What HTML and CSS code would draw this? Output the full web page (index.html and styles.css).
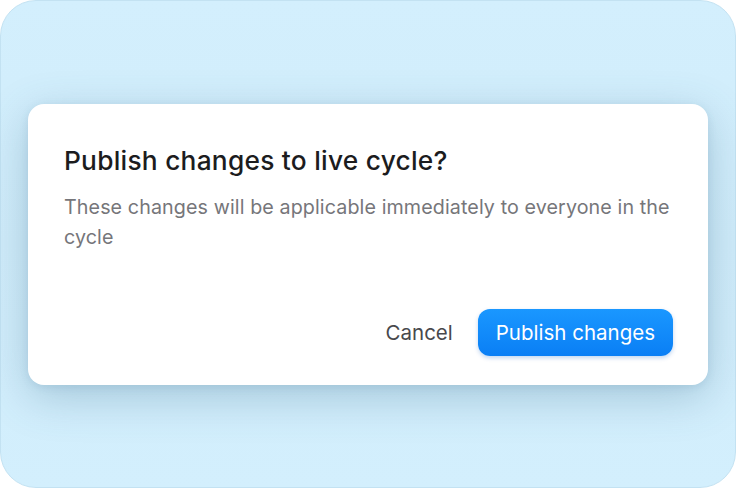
FILE: index.html
```html
<!DOCTYPE html>
<html>
<head>
<meta charset="utf-8">
<link rel="stylesheet" href="styles.css">
</head>
<body>
<div class="frame">
  <div class="dialog">
    <h1 class="title">Publish changes to live cycle?</h1>
    <p class="desc">These changes will be applicable immediately to everyone in the cycle</p>
    <div class="actions">
      <button class="btn-cancel">Cancel</button>
      <button class="btn-primary">Publish changes</button>
    </div>
  </div>
</div>
</body>
</html>
```

FILE: styles.css
```css
html, body {
  margin: 0;
  padding: 0;
  background: #ffffff;
}
body {
  width: 736px;
  height: 488px;
  font-family: Inter, "Noto Sans", sans-serif;
}
.frame {
  box-sizing: border-box;
  width: 736px;
  height: 488px;
  border: 1.5px solid #c3e2f2;
  border-radius: 36px;
  background: linear-gradient(180deg, #d3effd 0%, #d0ecfa 50%, #d3effd 100%);
  display: flex;
  justify-content: center;
  padding-top: 103px;
}
.dialog {
  box-sizing: border-box;
  width: 680px;
  height: 281px;
  background: #ffffff;
  border-radius: 16px;
  box-shadow: 0 12px 44px rgba(60, 110, 140, 0.3), 0 2px 8px rgba(60, 110, 140, 0.12);
  padding: 39px 35px 29px 36px;
  display: flex;
  flex-direction: column;
}
.title {
  margin: 0;
  font-size: 26.3px;
  font-weight: 500;
  line-height: 36px;
  color: #1c1c1e;
  letter-spacing: 0.25px;
}
.desc {
  margin: 13px 0 0 0;
  font-size: 19.7px;
  line-height: 30px;
  color: #76767a;
  letter-spacing: 0.1px;
  width: 615px;
}
.actions {
  margin-top: auto;
  display: flex;
  justify-content: flex-end;
  align-items: center;
  gap: 25px;
}
.btn-cancel {
  border: none;
  background: none;
  padding: 0;
  font-family: inherit;
  font-size: 20.5px;
  font-weight: 400;
  color: #48484c;
}
.btn-primary {
  border: none;
  font-family: inherit;
  font-size: 20.5px;
  font-weight: 400;
  color: #ffffff;
  height: 47px;
  padding: 0 18px;
  border-radius: 12px;
  background: linear-gradient(180deg, #1a97ff 0%, #0a7ff5 100%);
  box-shadow: 0 2px 4px rgba(0, 90, 200, 0.25);
}
```
